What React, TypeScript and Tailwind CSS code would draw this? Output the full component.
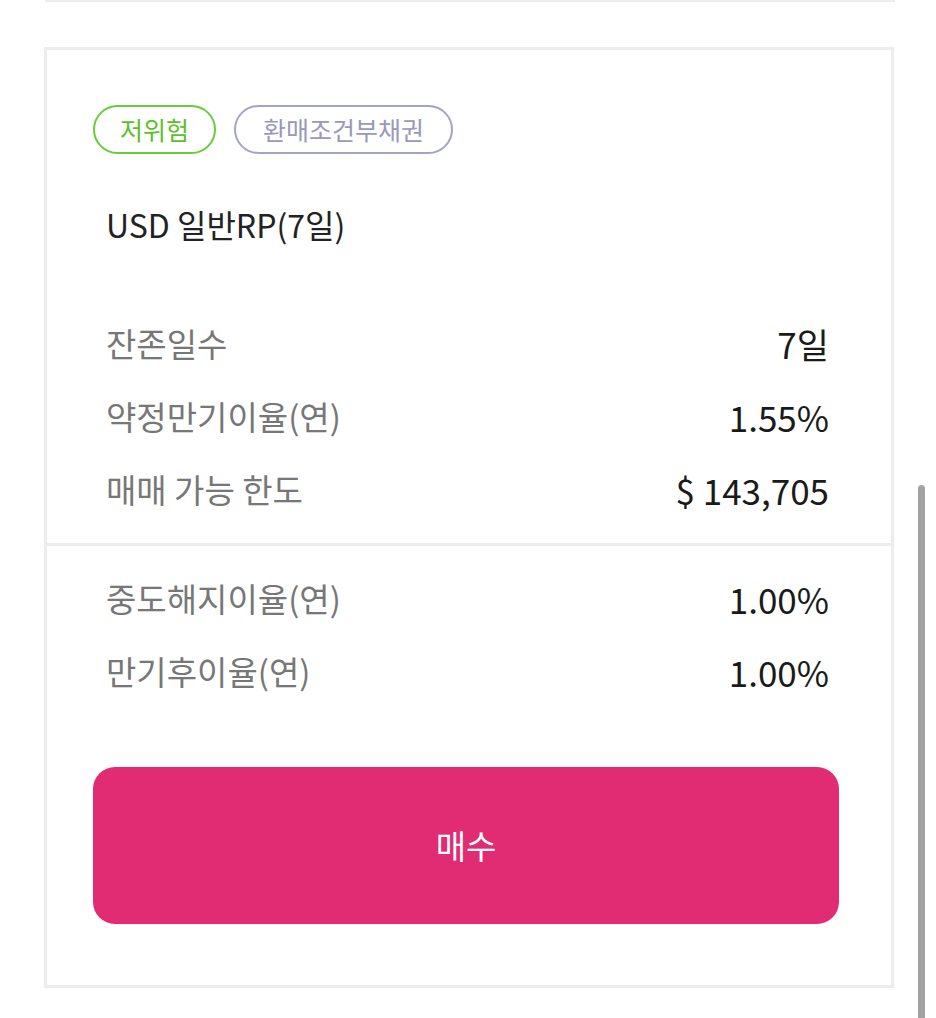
import React from "react";

const rows1 = [
  { label: "잔존일수", value: "7일" },
  { label: "약정만기이율(연)", value: "1.55%" },
  { label: "매매 가능 한도", value: "$ 143,705" },
];
const rows2 = [
  { label: "중도해지이율(연)", value: "1.00%" },
  { label: "만기후이율(연)", value: "1.00%" },
];

function Row({ label, value }: { label: string; value: string }) {
  return (
    <div className="flex h-[73px] items-center justify-between pl-[59px] pr-[62px]">
      <span className="text-[33px] font-normal leading-none text-[#777]">{label}</span>
      <span className="text-[35px] font-normal leading-none text-[#1a1a1a]">{value}</span>
    </div>
  );
}

export default function App() {
  return (
    <div
      className="relative h-[1018px] w-[936px] overflow-hidden bg-white"
      style={{ fontFamily: '"Noto Sans CJK KR", "Noto Sans", sans-serif' }}
    >
      <div className="ml-[45px] h-[2px] w-[850px] bg-[#ededed]" />
      <div className="ml-[44px] mt-[45px] w-[850px] border-[3px] border-[#ececec]">
        <div className="pb-[17px] pt-[55px]">
          <div className="flex gap-[18px] pl-[46px]">
            <span className="flex h-[49px] items-center rounded-full border-2 border-[#6ccb3c] px-[25px] text-[25px] font-normal leading-none text-[#5dbf2b]">
              저위험
            </span>
            <span className="flex h-[49px] items-center rounded-full border-2 border-[#a3a3c6] px-[27px] text-[25px] font-normal leading-none text-[#9999b9]">
              환매조건부채권
            </span>
          </div>
          <div className="mt-[50px] flex h-[40px] items-center pl-[59px] text-[32px] font-normal leading-none text-[#222]">
            USD 일반RP(7일)
          </div>
          <div className="mt-[63px]">
            {rows1.map((r) => (
              <Row key={r.label} {...r} />
            ))}
          </div>
        </div>
        <div className="border-t-[3px] border-[#ececec] pb-[61px] pt-[16px]">
          {rows2.map((r) => (
            <Row key={r.label} {...r} />
          ))}
          <div className="ml-[46px] mt-[59px] flex h-[157px] w-[746px] items-center justify-center rounded-[22px] bg-[#e12b72] text-[33px] font-normal leading-none text-white">
            매수
          </div>
        </div>
      </div>
      <div className="absolute left-[918px] top-[485px] h-[540px] w-[7px] rounded-t-full bg-[#a3a3a3]" />
    </div>
  );
}
